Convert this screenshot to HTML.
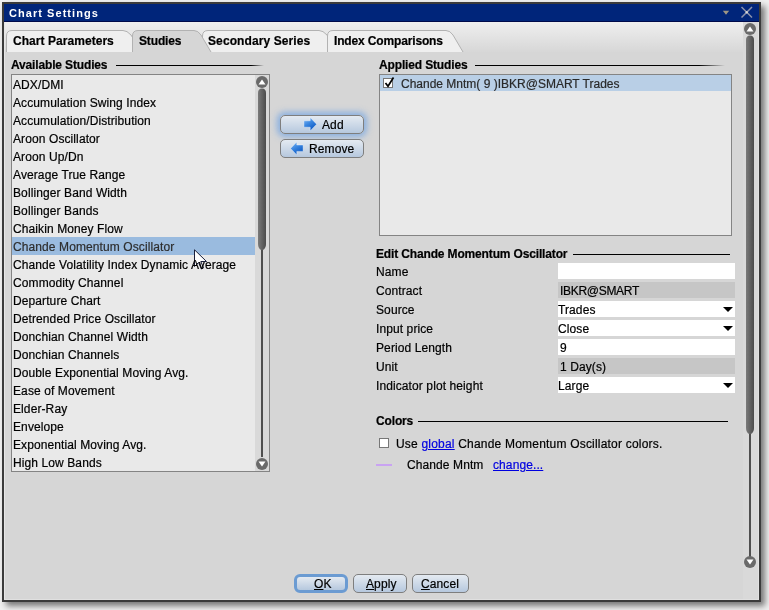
<!DOCTYPE html>
<html><head><meta charset="utf-8">
<style>
*{box-sizing:border-box;margin:0;padding:0}
html,body{width:769px;height:610px;overflow:hidden;background:#f0f0f0;font-family:"Liberation Sans",sans-serif;font-size:12px;color:#000}
.a{position:absolute}
#win{position:absolute;left:2px;top:2px;width:759px;height:600px;background:#3b3b3b;box-shadow:4px 4px 6px rgba(0,0,0,0.5)}
#title{left:4px;top:4px;width:755px;height:18px;background:#00257a;border-bottom:1px solid #000a4a}
#title span{position:absolute;left:5px;top:3px;color:#fff;font-weight:bold;font-size:11px;letter-spacing:1.05px;-webkit-text-stroke:0}
#content{left:4px;top:22px;width:755px;height:578px;background:#d6d6d6;border-left:1px solid #e6e6e6;border-right:1px solid #e2e2e2;border-bottom:1px solid #e0e0e0}
#tabstrip{left:5px;top:22px;width:738px;height:30px;background:linear-gradient(#efefef,#d7d7d7)}
.hdr{font-weight:bold;white-space:nowrap;letter-spacing:-0.15px}
.hline{height:1px;background:linear-gradient(90deg,#000 0%,#000 calc(100% - 13px),rgba(0,0,0,0) 100%)}
.list{background:#e9e9e9;border:1px solid #848484}
.row{position:absolute;left:0;height:18px;line-height:18px;padding-left:1px;white-space:nowrap;padding-top:1px}
.sbcol{background:#d9d9d9}
.btn{border:1px solid #7e7e7e;border-radius:5px;background:linear-gradient(#e4eaf1,#b6c8de);text-align:center;white-space:nowrap}
.lbl{position:absolute;left:376px;white-space:nowrap}
.fld{position:absolute;left:558px;width:177px;height:16px;background:#fff;white-space:nowrap;line-height:18px}
.fld.g{background:#c6c6c6;padding-left:2px}
.tri{position:absolute;right:2px;top:6px;width:0;height:0;border-left:5px solid transparent;border-right:5px solid transparent;border-top:5px solid #000}
u{text-decoration:underline;text-underline-offset:1px}
a.lnk{color:#0000e0;text-decoration:underline}
</style></head><body>
<div id="root" style="position:absolute;left:0;top:0;width:769px;height:610px;will-change:transform;-webkit-text-stroke:0.2px currentColor;letter-spacing:0.1px">
<div id="win"></div>
<div id="title" class="a"><span>Chart Settings</span>
  <svg class="a" style="left:718px;top:6px" width="8" height="6"><path d="M0.8 0.8 L7.2 0.8 L4 4.8 Z" fill="#9d9684"/></svg>
  <svg class="a" style="left:736px;top:2px" width="14" height="13"><path d="M1.5 1 L12 11.5 M12 1 L1.5 11.5" stroke="#8a92ab" stroke-width="1.5"/><circle cx="6.75" cy="6.25" r="1.2" fill="#d6d6d6"/></svg>
</div>
<div id="content" class="a"></div>
<div id="tabstrip" class="a"></div>

<!-- tabs -->
<svg class="a" style="left:0;top:22px" width="480" height="32">
  <!-- Chart Parameters -->
  <path d="M6.5 30 L6.5 14 Q6.5 8.5 12 8.5 L123 8.5 Q127 8.5 131 13 L142 30 L142 32 L6.5 32 Z" fill="#efefef" stroke="#b2b2b2" stroke-width="1"/>
  <!-- Secondary Series -->
  <path d="M202.5 30 L202.5 14 Q202.5 8.5 208 8.5 L319 8.5 Q323 8.5 327 13 L338 30 L338 32 L202.5 32 Z" fill="#efefef" stroke="#b2b2b2" stroke-width="1"/>
  <!-- Index Comparisons -->
  <path d="M327.5 30 L327.5 14 Q327.5 8.5 333 8.5 L446 8.5 Q450 8.5 453 13 L463 30 L463 32 L327.5 32 Z" fill="#efefef" stroke="#b2b2b2" stroke-width="1"/>
  <!-- Studies selected -->
  <path d="M132.5 30 L132.5 14 Q132.5 8.5 138 8.5 L194 8.5 Q198 8.5 201 13 L211 30 L211 32 L132.5 32 Z" fill="#d6d6d6" stroke="#b2b2b2" stroke-width="1"/>
  <rect x="5" y="30" width="475" height="2" fill="#d6d6d6"/>
</svg>
<div class="a hdr" style="left:13px;top:34px;letter-spacing:0.05px">Chart Parameters</div>
<div class="a hdr" style="left:139px;top:34px">Studies</div>
<div class="a hdr" style="left:208px;top:34px;letter-spacing:0.1px">Secondary Series</div>
<div class="a hdr" style="left:334px;top:34px">Index Comparisons</div>

<!-- Available studies -->
<div class="a hdr" style="left:11px;top:58px">Available Studies</div>
<div class="a hline" style="left:116px;top:65px;width:148px"></div>
<div class="a list" style="left:11px;top:74px;width:259px;height:398px">
  <div class="a" style="left:0;top:162px;width:243px;height:18px;background:#9abbdf"></div>
  <svg class="a" style="left:182px;top:174px" width="16" height="22"><path d="M0.5 0.8 L0.5 17.5 L4.5 13.5 L7.5 20 L9.5 19 L6.8 12.5 L12.5 12.5 Z" fill="#fff" stroke="#1a1f3a" stroke-width="1"/></svg>
  <div class="row" style="top:0">ADX/DMI</div>
  <div class="row" style="top:18px">Accumulation Swing Index</div>
  <div class="row" style="top:36px">Accumulation/Distribution</div>
  <div class="row" style="top:54px">Aroon Oscillator</div>
  <div class="row" style="top:72px">Aroon Up/Dn</div>
  <div class="row" style="top:90px">Average True Range</div>
  <div class="row" style="top:108px">Bollinger Band Width</div>
  <div class="row" style="top:126px">Bollinger Bands</div>
  <div class="row" style="top:144px">Chaikin Money Flow</div>
  <div class="row" style="top:162px;color:#2e2e2e">Chande Momentum Oscillator</div>
  <div class="row" style="top:180px">Chande Volatility Index Dynamic Average</div>
  <div class="row" style="top:198px">Commodity Channel</div>
  <div class="row" style="top:216px">Departure Chart</div>
  <div class="row" style="top:234px">Detrended Price Oscillator</div>
  <div class="row" style="top:252px">Donchian Channel Width</div>
  <div class="row" style="top:270px">Donchian Channels</div>
  <div class="row" style="top:288px">Double Exponential Moving Avg.</div>
  <div class="row" style="top:306px">Ease of Movement</div>
  <div class="row" style="top:324px">Elder-Ray</div>
  <div class="row" style="top:342px">Envelope</div>
  <div class="row" style="top:360px">Exponential Moving Avg.</div>
  <div class="row" style="top:378px">High Low Bands</div>
  <div class="a sbcol" style="left:243px;top:0;width:14px;height:396px"></div>
</div>
<!-- list scrollbar -->
<svg class="a" style="left:255px;top:75px" width="14" height="396">
  <defs><linearGradient id="tg" x1="0" x2="1"><stop offset="0" stop-color="#7a7a7a"/><stop offset="1" stop-color="#4c4c4c"/></linearGradient></defs>
  <rect x="6" y="170" width="2" height="212" fill="#4f4f4f"/>
  <path d="M3 18 Q3 13.5 7 13.5 Q11 13.5 11 18 L11 169 Q11 173 8 175 L6 175 Q3 173 3 169 Z" fill="url(#tg)"/>
  <circle cx="7" cy="7" r="6" fill="#6a6a6a"/>
  <path d="M3.5 9.5 L10.5 9.5 L7 4.5 Z" fill="#fff"/>
  <circle cx="7" cy="389" r="6" fill="#6a6a6a"/>
  <path d="M3.5 386.5 L10.5 386.5 L7 391.5 Z" fill="#fff"/>
</svg>

<!-- cursor -->


<!-- Add / Remove -->
<div class="a btn" style="left:280px;top:115px;width:84px;height:19px;box-shadow:0 0 6px 3px rgba(105,160,228,0.7)"></div>
<svg class="a" style="left:303px;top:117px" width="14" height="14">
  <defs><linearGradient id="ag" x1="0" y1="0" x2="0.6" y2="1"><stop offset="0" stop-color="#86bdf6"/><stop offset="0.5" stop-color="#3a86e0"/><stop offset="1" stop-color="#0b58c4"/></linearGradient></defs>
  <path d="M0.9 3.8 L7.2 3.8 L7.2 0.5 L13.6 7.2 L7.2 13.9 L7.2 10.2 L0.9 10.2 Z" fill="url(#ag)" stroke="#ffffff" stroke-opacity="0.55" stroke-width="0.7"/>
</svg>
<div class="a" style="left:322px;top:118px">Add</div>
<div class="a btn" style="left:280px;top:139px;width:84px;height:19px"></div>
<svg class="a" style="left:290px;top:141px" width="14" height="14">
  <path d="M13.1 4 L6.8 4 L6.8 0.9 L0.5 7.4 L6.8 13.9 L6.8 10.4 L13.1 10.4 Z" fill="url(#ag)" stroke="#ffffff" stroke-opacity="0.55" stroke-width="0.7"/>
</svg>
<div class="a" style="left:309px;top:142px">Remove</div>

<!-- Applied studies -->
<div class="a hdr" style="left:379px;top:58px">Applied Studies</div>
<div class="a" style="left:475px;top:65px;width:250px;height:1px;background:linear-gradient(90deg,#000 0%,#000 calc(100% - 26px),rgba(0,0,0,0) 100%)"></div>
<div class="a list" style="left:379px;top:74px;width:353px;height:162px">
  <div class="a" style="left:0;top:0;width:351px;height:16px;background:#b9cfe6"></div>
  <div class="a" style="left:3px;top:3px;width:10px;height:10px;background:#fff;border:1px solid #777"></div>
  <svg class="a" style="left:4px;top:1px" width="12" height="12"><path d="M1.5 7 L4 10.2 L9.5 1.5" stroke="#000" stroke-width="1.7" fill="none"/></svg>
  <div class="a" style="left:21px;top:2px;color:#2a2a2a;white-space:nowrap;letter-spacing:0">Chande Mntm( 9 )IBKR@SMART Trades</div>
</div>

<!-- Edit section -->
<div class="a hdr" style="left:376px;top:247px">Edit Chande Momentum Oscillator</div>
<div class="a" style="left:573px;top:254px;width:157px;height:1px;background:#000"></div>
<div class="lbl" style="top:265px">Name</div>
<div class="lbl" style="top:284px">Contract</div>
<div class="lbl" style="top:303px">Source</div>
<div class="lbl" style="top:322px">Input price</div>
<div class="lbl" style="top:341px">Period Length</div>
<div class="lbl" style="top:360px">Unit</div>
<div class="lbl" style="top:379px">Indicator plot height</div>
<div class="fld" style="top:263px"></div>
<div class="fld g" style="top:282px;letter-spacing:-0.3px">IBKR@SMART</div>
<div class="fld" style="top:301px">Trades<span class="tri"></span></div>
<div class="fld" style="top:320px">Close<span class="tri"></span></div>
<div class="fld" style="top:339px;padding-left:2px">9</div>
<div class="fld g" style="top:358px">1 Day(s)</div>
<div class="fld" style="top:377px">Large<span class="tri"></span></div>

<!-- Colors -->
<div class="a hdr" style="left:376px;top:414px">Colors</div>
<div class="a" style="left:418px;top:421px;width:310px;height:1px;background:#000"></div>
<div class="a" style="left:379px;top:438px;width:10px;height:10px;background:#fff;border:1px solid #777"></div>
<div class="a" style="left:396px;top:437px;white-space:nowrap;letter-spacing:0.2px">Use <a class="lnk">global</a> Chande Momentum Oscillator colors.</div>
<div class="a" style="left:376px;top:464px;width:16px;height:2px;background:#c9a3f2"></div>
<div class="a" style="left:407px;top:458px;white-space:nowrap">Chande Mntm</div>
<div class="a" style="left:493px;top:458px;white-space:nowrap"><a class="lnk">change...</a></div>

<!-- main scrollbar -->
<svg class="a" style="left:743px;top:22px" width="15" height="577">
  <rect x="0" y="0" width="15" height="577" fill="#d9d9d9"/>
  <rect x="6" y="408" width="2" height="128" fill="#4f4f4f"/>
  <path d="M3 18 Q3 13.5 7 13.5 Q11 13.5 11 18 L11 406 Q11 410 8 412 L6 412 Q3 410 3 406 Z" fill="url(#tg)"/>
  <circle cx="7" cy="7" r="6" fill="#6a6a6a"/>
  <path d="M3.5 9.5 L10.5 9.5 L7 4.5 Z" fill="#fff"/>
  <circle cx="7" cy="540" r="6" fill="#6a6a6a"/>
  <path d="M3.5 537.5 L10.5 537.5 L7 542.5 Z" fill="#fff"/>
</svg>

<!-- bottom buttons -->
<div class="a" style="left:294px;top:574px;width:54px;height:19px;border:3px solid #6b9bd2;border-radius:6px;background:linear-gradient(#e4eaf1,#b6c8de)"></div>
<div class="a" style="left:314px;top:577px"><u>O</u>K</div>
<div class="a btn" style="left:353px;top:574px;width:54px;height:19px"></div>
<div class="a" style="left:366px;top:577px"><u>A</u>pply</div>
<div class="a btn" style="left:412px;top:574px;width:57px;height:19px"></div>
<div class="a" style="left:421px;top:577px"><u>C</u>ancel</div>
</div>
</body></html>
